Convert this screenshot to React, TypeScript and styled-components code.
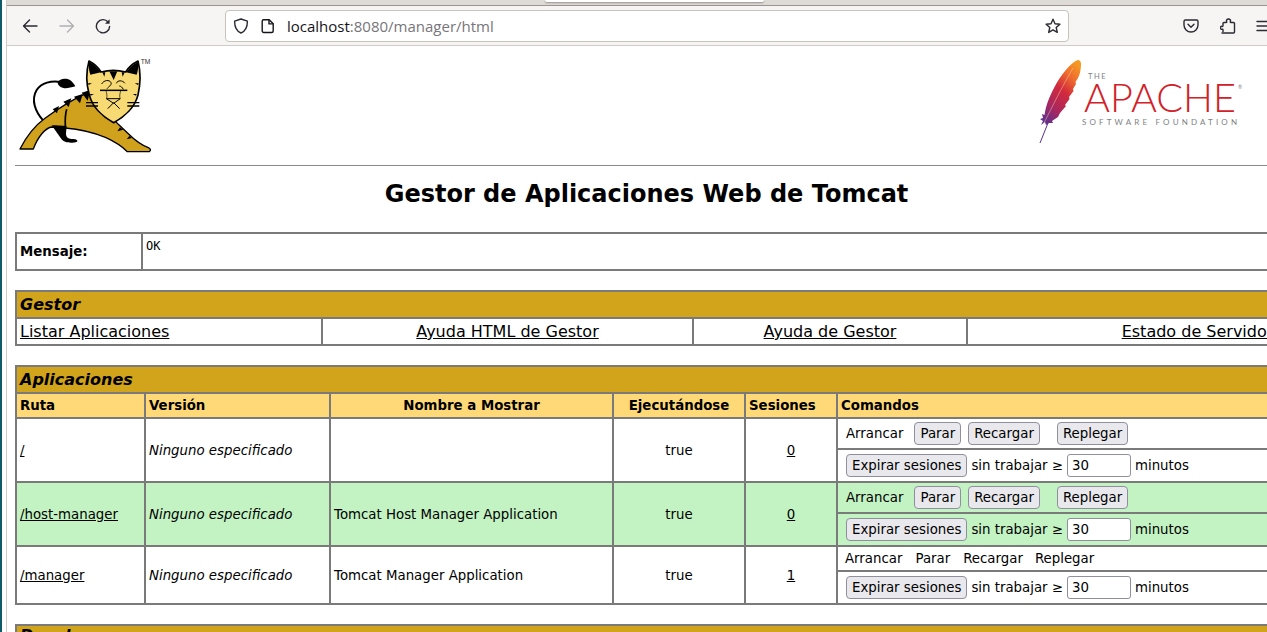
import styled, { createGlobalStyle } from 'styled-components';

const GlobalStyle = createGlobalStyle`
    html, body {
        margin: 0;
        height: 100%;
        overflow: hidden;
        background: #ffffff;
    }
    body {
        font-family: "DejaVu Sans", sans-serif;
        font-size: 13.33px;
        color: #000000;
    }
`;

const Screen = styled.div`
    display: flex;
    width: 1267px;
    height: 632px;
    overflow: hidden;
`;

const DesktopEdge = styled.div`
    flex: none;
    width: 2px;
    background: #0f5a68;
`;

const Window = styled.div`
    flex: none;
    width: 1261px;
    margin-left: 4px;
    border-left: 1px solid #cfcbc6;
    display: flex;
    flex-direction: column;
`;

const TabStrip = styled.div`
    flex: none;
    height: 5px;
    background: #dedad6;
    border-bottom: 1px solid #9b9490;
    box-sizing: content-box;
`;

const ActiveTab = styled.div`
    width: 219px;
    height: 2px;
    margin-left: 538px;
    background: #ffffff;
    border-radius: 0 0 4px 4px;
    box-shadow: 0 1px 2px rgba(0, 0, 0, 0.35);
`;

const Toolbar = styled.div`
    flex: none;
    height: 40px;
    box-sizing: border-box;
    display: flex;
    align-items: center;
    padding-left: 5px;
    background: #f6f5f3;
    border-bottom: 1px solid #cfcbc6;
    overflow: hidden;
`;

const ToolButton = styled.div<{ $faded?: boolean }>`
    flex: none;
    width: 36.5px;
    height: 32px;
    display: flex;
    align-items: center;
    justify-content: center;
    color: ${p => (p.$faded ? '#b0afb2' : '#2b2a33')};
`;

const UrlBar = styled.div`
    flex: none;
    width: 844px;
    height: 32px;
    box-sizing: border-box;
    margin-left: 103.5px;
    margin-right: 104px;
    padding-left: 7px;
    display: flex;
    align-items: center;
    background: #ffffff;
    border: 1px solid #c8c4bd;
    border-radius: 4px;
    color: #2b2a33;
`;

const UrlIcon = styled.span<{ $w: number }>`
    flex: none;
    width: ${p => p.$w}px;
    display: flex;
    align-items: center;
    justify-content: flex-start;
`;

const UrlText = styled.span`
    flex: 1;
    font-family: "Open Sans", sans-serif;
    font-size: 15px;
    color: #15141a;
`;

const UrlDim = styled.span`
    color: #77767b;
`;

const StarSlot = styled.span`
    flex: none;
    width: 30px;
    display: flex;
    justify-content: center;
`;

const Content = styled.main`
    flex: 1;
    min-height: 0;
    width: 1263px;
    margin-left: 8px;
    overflow: hidden;
`;

const PageHeader = styled.header`
    height: 119px;
    display: flex;
    justify-content: space-between;
    align-items: flex-start;
`;

const TomcatLogo = styled.svg`
    margin-top: 4px;
    margin-left: 1px;
    flex: none;
`;

const ApacheLogo = styled.svg`
    margin-top: 14px;
    margin-right: 33px;
    flex: none;
`;

const Rule = styled.hr`
    margin: 0;
    border: 0;
    height: 1px;
    background: #8a8a8a;
`;

const Title = styled.h1`
    margin: 14px 0 24px;
    font-size: 24px;
    line-height: 28px;
    font-weight: 700;
    text-align: center;
`;

const Table = styled.table<{ $w: number }>`
    table-layout: fixed;
    width: ${p => p.$w}px;
    border-collapse: collapse;
    margin-bottom: 19px;
`;

const Col = styled.col<{ $w?: number }>`
    width: ${p => (p.$w ? `${p.$w}px` : 'auto')};
`;

const Cell = styled.td<{ $h?: number; $bg?: string; $center?: boolean; $italic?: boolean; $size?: number }>`
    border: 2px solid #7a7a7a;
    padding: 0 3px;
    height: ${p => (p.$h ? `${p.$h}px` : 'auto')};
    background: ${p => p.$bg ?? 'transparent'};
    text-align: ${p => (p.$center ? 'center' : 'left')};
    font-style: ${p => (p.$italic ? 'italic' : 'normal')};
    font-size: ${p => p.$size ?? 13.33}px;
    box-sizing: border-box;
    overflow: hidden;
    white-space: nowrap;
`;

const TitleCell = styled(Cell)`
    background: #d2a41c;
    font-size: 16px;
    font-weight: 700;
    font-style: italic;
`;

const ClippedTitleCell = styled(TitleCell)`
    vertical-align: top;
`;

const HeadCell = styled(Cell)`
    background: #ffd977;
    font-weight: 700;
`;

const MessageLabel = styled(Cell)`
    font-weight: 700;
`;

const MessageBody = styled(Cell)`
    vertical-align: top;
    padding-top: 5px;
    font-family: "DejaVu Sans Mono", monospace;
    font-size: 12px;
`;

const Link = styled.a`
    color: #000000;
    text-decoration: underline;
`;

const CommandRow = styled.div`
    display: flex;
    align-items: center;
    padding-left: 5px;
`;

const PlainRow = styled(CommandRow)`
    padding-left: 4px;
`;

const Label = styled.span<{ $left?: number }>`
    margin-left: ${p => p.$left ?? 0}px;
`;

const Button = styled.button<{ $left?: number }>`
    height: 23px;
    margin-left: ${p => p.$left ?? 0}px;
    padding: 0 5px;
    background: #e9e9ed;
    border: 1px solid #8f8f9d;
    border-radius: 4px;
    font-family: inherit;
    font-size: 13.33px;
    color: #000000;
`;

const MinutesInput = styled.input`
    width: 64px;
    height: 23px;
    box-sizing: border-box;
    margin: 0 4px;
    padding: 0 4px;
    background: #ffffff;
    border: 1px solid #8f8f9d;
    border-radius: 3px;
    font-family: inherit;
    font-size: 13.33px;
    color: #000000;
`;

const GREEN = '#c3f3c3';

const apps = [
    { path: '/', name: '', bg: undefined, running: true, sessions: 0, rowH: [31, 33] },
    { path: '/host-manager', name: 'Tomcat Host Manager Application', bg: GREEN, running: true, sessions: 0, rowH: [31, 33] },
    { path: '/manager', name: 'Tomcat Manager Application', bg: undefined, running: false, sessions: 1, rowH: [25, 33] },
];

const ExpireRow = () => (
    <CommandRow>
        <Button>Expirar sesiones</Button>
        <Label $left={4}>sin trabajar ≥</Label>
        <MinutesInput defaultValue="30" />
        <Label>minutos</Label>
    </CommandRow>
);

const BackIcon = () => (
    <svg width="16" height="16" viewBox="0 0 16 16" fill="none" stroke="currentColor" strokeWidth="1.4" strokeLinecap="round" strokeLinejoin="round">
        <path d="M15 8H1.5M7.5 2 1.5 8l6 6" />
    </svg>
);

const ForwardIcon = () => (
    <svg width="16" height="16" viewBox="0 0 16 16" fill="none" stroke="currentColor" strokeWidth="1.4" strokeLinecap="round" strokeLinejoin="round">
        <path d="M1 8h13.5M8.5 2l6 6-6 6" />
    </svg>
);

const ReloadIcon = () => (
    <svg width="16" height="16" viewBox="0 0 16 16" fill="none" stroke="currentColor" strokeWidth="1.4" strokeLinecap="round">
        <path d="M13.2 4.2A6.6 6.6 0 1 0 14.6 8.4" />
        <path d="M14.6 1.2v4.6H10z" fill="currentColor" stroke="none" />
    </svg>
);

const ShieldIcon = () => (
    <svg width="16" height="16" viewBox="0 0 16 16" fill="none" stroke="#2b2a33" strokeWidth="1.4" strokeLinejoin="round">
        <path d="M8 1 1.6 3.2c0 6 1.6 9.8 6.4 11.8 4.8-2 6.4-5.800 6.400-11.800z" />
    </svg>
);

const PageIcon = () => (
    <svg width="14" height="16" viewBox="0 0 14 16" fill="none" stroke="#15141a" strokeWidth="1.4" strokeLinejoin="round">
        <path d="M2.700 1.700h5.500l4 4v7.300a1.500 1.500 0 0 1-1.500 1.500H2.700a1.500 1.500 0 0 1-1.500-1.500V3.200a1.500 1.500 0 0 1 1.500-1.500z" />
        <path d="M8 1.700v4.200h4.200" />
    </svg>
);

const StarIcon = () => (
    <svg width="16" height="16" viewBox="0 0 16 16" fill="none" stroke="#2b2a33" strokeWidth="1.4" strokeLinejoin="round">
        <path d="M8 1.200 10 5.700l4.900.5-3.700 3.300 1.100 4.900L8 11.900l-4.300 2.500 1.100-4.900L1.100 6.200 6 5.700z" />
    </svg>
);

const PocketIcon = () => (
    <svg width="16" height="16" viewBox="0 0 16 16" fill="none" stroke="#2b2a33" strokeWidth="1.4" strokeLinecap="round" strokeLinejoin="round">
        <path d="M2.400 2h11.200A1.400 1.400 0 0 1 15 3.400V7a7 7 0 0 1-14 0V3.400A1.400 1.400 0 0 1 2.400 2z" />
        <path d="m5 6.300 3 2.900 3-2.900" />
    </svg>
);

const PuzzleIcon = () => (
    <svg width="16" height="16" viewBox="0 0 16 16" fill="none" stroke="#2b2a33" strokeWidth="1.4" strokeLinejoin="round">
        <path d="M1.500 15h12a1 1 0 0 0 1-1V5.500a1 1 0 0 0-1-1H11c-.8 0-.9-.5-.6-1.100.5-1.100-.4-2.400-1.900-2.400S6.100 2.300 6.600 3.400c.3.600.2 1.100-.6 1.100H4a1 1 0 0 0-1 1v2.300c0 .7-.5.800-1.100.5C.9 7.900.5 9 .5 9.700c0 1 .7 1.900 1.400 1.600.6-.3 1.100-.2 1.100.5V14" />
    </svg>
);

const MenuIcon = () => (
    <svg width="16" height="16" viewBox="0 0 16 16" fill="none" stroke="#2b2a33" strokeWidth="1.4" strokeLinecap="round">
        <path d="M1 3.500h14M1 8h14M1 12.500h14" />
    </svg>
);

const Tomcat = () => (
    <TomcatLogo width="140" height="110" viewBox="18 0 420 330">
        <path d="M100 212C76 186 62 150 80 120c14-22 45-29 72-24" fill="none" stroke="#000" strokeWidth="6" />
        <path d="M143 97c5-12 25-14 37-7 8 6 13 13 16 19-14 4-26 7-36 5-10-2-17-9-17-17z" fill="#000" />
        <path d="M30 297c18-35 42-68 75-92 40-30 85-58 130-78l90 96 30 28c18 18 38 33 60 42 8 4 8 8 3 12H352c-18-18-38-30-64-42-38-16-80-26-122-29l-42-3c-18 4-40 28-54 66z" fill="#d0a11d" stroke="#000" strokeWidth="4" strokeLinejoin="round" />
        <path d="M125 226c8 0 30 1 45 2l-2 22c0 12 6 16 16 17 10 0 18 1 18 6 0 4-8 5-18 5-18 0-24-4-32-14z" fill="#000" />
        <path d="M170 178c-4 15-5 32-4 50" fill="none" stroke="#000" strokeWidth="5" />
        <path d="M192 140l18 20 8-28zM160 155l16 16 8-26zM128 178l13 12 6-22zM215 128l18 24 8-32zM330 232l-8 12 18-5zM358 258l-8 10 16-4z" fill="#000" />
        <path d="M237 33C250 40 265 52 273 66C297 60 323 60 347 66C355 52 370 40 384 33C392 65 392 100 384 135C375 170 345 200 311 218C277 200 247 170 238 135C228 100 228 65 237 33Z" fill="#f8da74" stroke="#000" strokeWidth="5" strokeLinejoin="round" />
        <path d="M237 35c16 8 27 20 36 32l-32 7c-4-12-6-26-4-39zM384 35c-16 8-27 20-36 32l32 7c4-12 6-26 4-39z" fill="#000" />
        <path d="M298 64h24l-11 26zM277 67h9l-3 13zM335 67h9l-6 13z" fill="#000" />
        <path d="M234 100h12l-10 5zM386 100h-12l10 5zM240 132h12l-10 5zM380 132h-12l10 5z" fill="#000" />
        <path d="M275 102c6-12 24-14 28-4 3 8-8 12-12 18M345 100c-8-10-22-10-26 0 M340 118c-3-6-8-10-12-10" fill="none" stroke="#000" strokeWidth="3" />
        <path d="M270 121h82" stroke="#000" strokeWidth="4.500" />
        <path d="M228 158h36M228 168h36M352 158h36M352 168h36" stroke="#000" strokeWidth="4" />
        <path d="M288 122c2 8 4 16 2 22M332 122c-2 8-4 16-2 22" fill="none" stroke="#000" strokeWidth="2" />
        <path d="M289 146h42l-20 14zM311 158l-18 18M311 158l18 18" fill="none" stroke="#000" strokeWidth="3" strokeLinejoin="round" />
        <text x="392" y="43" fontFamily="Liberation Sans, sans-serif" fontSize="20" fill="#333">TM</text>
    </TomcatLogo>
);

const Apache = () => (
    <ApacheLogo width="215" height="90" viewBox="0 0 215 90">
        <defs>
            <linearGradient id="feather" x1="0.8" y1="0" x2="0.2" y2="1">
                <stop offset="0" stopColor="#f69923" />
                <stop offset="0.22" stopColor="#ee6a2e" />
                <stop offset="0.45" stopColor="#d22a3c" />
                <stop offset="0.75" stopColor="#a8275f" />
                <stop offset="1" stopColor="#62308d" />
            </linearGradient>
        </defs>
        <path d="M10 83 20 58" stroke="#5c3190" strokeWidth="1" />
        <path d="M47.700 0C50 0 51.500 2 51 6C50.500 11 50 14 48 18L45.500 22L46 24L43 29L43.500 31L39 37L39.500 39L35 45L36 46L30 53L28 57L22 61L23 63L19 63L16 65L15 62L11 65L13 61L10 59L13 58L12 54L14.500 55C16 45 19 38 24 28C30 16 40 3 47.700 0Z" fill="url(#feather)" />
        <path d="M43 8C33 25 23 45 14 63" stroke="#f8c9a8" strokeWidth="0.5" fill="none" />
        <text x="58" y="19" fontFamily="Lato, sans-serif" fontSize="7.500" letterSpacing="1.500" fill="#808285">THE</text>
        <text x="54" y="52" fontFamily="Lato, sans-serif" fontWeight="300" fontSize="39" textLength="152" lengthAdjust="spacingAndGlyphs" fill="#d22128">APACHE</text>
        <text x="52" y="65" fontFamily="Lato, sans-serif" fontSize="8" textLength="155" fill="#808285">SOFTWARE FOUNDATION</text>
        <text x="208" y="29" fontFamily="Lato, sans-serif" fontSize="5" fill="#808285">®</text>
    </ApacheLogo>
);

const App = () => {
    return (
        <Screen>
            <GlobalStyle />
            <DesktopEdge />
            <Window>
                <TabStrip>
                    <ActiveTab />
                </TabStrip>
                <Toolbar>
                    <ToolButton><BackIcon /></ToolButton>
                    <ToolButton $faded><ForwardIcon /></ToolButton>
                    <ToolButton><ReloadIcon /></ToolButton>
                    <UrlBar>
                        <UrlIcon $w={28}><ShieldIcon /></UrlIcon>
                        <UrlIcon $w={26}><PageIcon /></UrlIcon>
                        <UrlText>localhost<UrlDim>:8080/manager/html</UrlDim></UrlText>
                        <StarSlot><StarIcon /></StarSlot>
                    </UrlBar>
                    <ToolButton><PocketIcon /></ToolButton>
                    <ToolButton><PuzzleIcon /></ToolButton>
                    <ToolButton><MenuIcon /></ToolButton>
                </Toolbar>
                <Content>
                    <PageHeader>
                        <Tomcat />
                        <Apache />
                    </PageHeader>
                    <Rule />
                    <Title>Gestor de Aplicaciones Web de Tomcat</Title>

                    <Table $w={1414}>
                        <colgroup>
                            <Col $w={126} />
                            <Col />
                        </colgroup>
                        <tbody>
                            <tr>
                                <MessageLabel $h={37}>Mensaje:</MessageLabel>
                                <MessageBody>OK</MessageBody>
                            </tr>
                        </tbody>
                    </Table>

                    <Table $w={1414}>
                        <colgroup>
                            <Col $w={306} />
                            <Col $w={371} />
                            <Col $w={274} />
                            <Col />
                        </colgroup>
                        <tbody>
                            <tr>
                                <TitleCell colSpan={4} $h={27}>Gestor</TitleCell>
                            </tr>
                            <tr>
                                <Cell $h={27} $size={16}><Link href="#">Listar Aplicaciones</Link></Cell>
                                <Cell $h={27} $size={16} $center><Link href="#">Ayuda HTML de Gestor</Link></Cell>
                                <Cell $h={27} $size={16} $center><Link href="#">Ayuda de Gestor</Link></Cell>
                                <Cell $h={27} $size={16} $center><Link href="#">Estado de Servidor</Link></Cell>
                            </tr>
                        </tbody>
                    </Table>

                    <Table $w={1414}>
                        <colgroup>
                            <Col $w={129} />
                            <Col $w={185} />
                            <Col $w={283} />
                            <Col $w={132} />
                            <Col $w={92} />
                            <Col />
                        </colgroup>
                        <tbody>
                            <tr>
                                <TitleCell colSpan={6} $h={27}>Aplicaciones</TitleCell>
                            </tr>
                            <tr>
                                <HeadCell $h={25}>Ruta</HeadCell>
                                <HeadCell $h={25}>Versión</HeadCell>
                                <HeadCell $h={25} $center>Nombre a Mostrar</HeadCell>
                                <HeadCell $h={25} $center>Ejecutándose</HeadCell>
                                <HeadCell $h={25}>Sesiones</HeadCell>
                                <HeadCell $h={25}>Comandos</HeadCell>
                            </tr>
                            {apps.map(app => [
                                <tr key={app.path}>
                                    <Cell rowSpan={2} $bg={app.bg}><Link href="#">{app.path}</Link></Cell>
                                    <Cell rowSpan={2} $bg={app.bg} $italic>Ninguno especificado</Cell>
                                    <Cell rowSpan={2} $bg={app.bg}>{app.name}</Cell>
                                    <Cell rowSpan={2} $bg={app.bg} $center>true</Cell>
                                    <Cell rowSpan={2} $bg={app.bg} $center><Link href="#">{app.sessions}</Link></Cell>
                                    <Cell $bg={app.bg} $h={app.rowH[0]}>
                                        {app.running ? (
                                            <CommandRow>
                                                <Label>Arrancar</Label>
                                                <Button $left={11}>Parar</Button>
                                                <Button $left={7}>Recargar</Button>
                                                <Button $left={17}>Replegar</Button>
                                            </CommandRow>
                                        ) : (
                                            <PlainRow>
                                                <Label>Arrancar</Label>
                                                <Label $left={13}>Parar</Label>
                                                <Label $left={13}>Recargar</Label>
                                                <Label $left={12}>Replegar</Label>
                                            </PlainRow>
                                        )}
                                    </Cell>
                                </tr>,
                                <tr key={`${app.path}-expire`}>
                                    <Cell $bg={app.bg} $h={app.rowH[1]}>
                                        <ExpireRow />
                                    </Cell>
                                </tr>,
                            ])}
                        </tbody>
                    </Table>

                    <Table $w={1414}>
                        <tbody>
                            <tr>
                                <ClippedTitleCell $h={27}>Desplegar</ClippedTitleCell>
                            </tr>
                        </tbody>
                    </Table>
                </Content>
            </Window>
        </Screen>
    );
};

export default App;
